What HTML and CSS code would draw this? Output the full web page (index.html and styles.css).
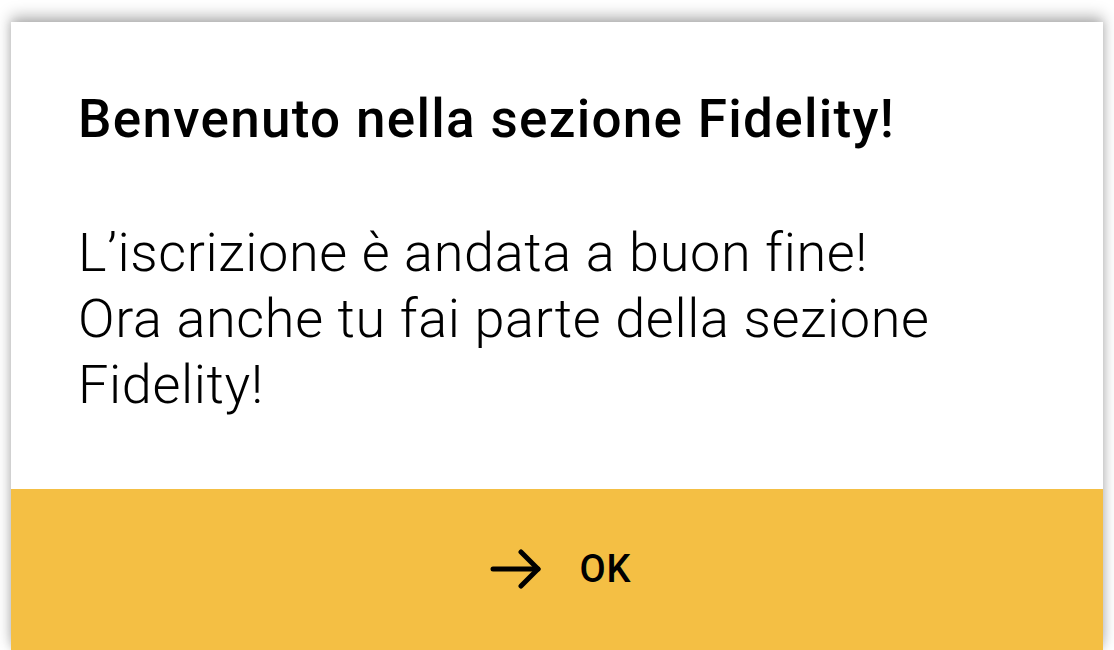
FILE: index.html
```html
<!DOCTYPE html>
<html lang="it">
<head>
<meta charset="utf-8">
<link rel="stylesheet" href="styles.css">
</head>
<body>
<div class="dialog">
  <div class="content">
    <h1 class="title">Benvenuto nella sezione Fidelity!</h1>
    <p class="message">L’iscrizione è andata a buon fine!<br>Ora anche tu fai parte della sezione Fidelity!</p>
  </div>
  <div class="footer">
    <button class="ok-btn">
      <svg class="arrow" width="52" height="40" viewBox="0 0 52 40" fill="none" stroke="#000" stroke-width="5" stroke-linecap="round" stroke-linejoin="round">
        <path d="M3 20 H48"/>
        <path d="M31 3 L48 20 L31 37"/>
      </svg>
      <span class="ok-label">OK</span>
    </button>
  </div>
</div>
</body>
</html>
```
FILE: styles.css
```css
html, body {
  margin: 0;
  padding: 0;
  background: #ffffff;
  overflow: hidden;
  height: 650px;
}
.dialog {
  margin: 22px 0 0 11px;
  width: 1092px;
  height: 628px;
  background: #ffffff;
  box-shadow: 0 -6px 14px rgba(0,0,0,0.28), 0 0 8px rgba(0,0,0,0.12);
  display: flex;
  flex-direction: column;
  font-family: Roboto, "Liberation Sans", sans-serif;
  color: #000;
}
.content {
  height: 467px;
  padding: 0 40px 0 67px;
  box-sizing: border-box;
}
.title {
  margin: 64px 0 0 0;
  font-size: 53px;
  letter-spacing: 1.3px;
  font-weight: 500;
  line-height: 66px;
}
.message {
  margin: 68px 0 0 0;
  font-size: 54px;
  letter-spacing: 0.65px;
  font-weight: 300;
  line-height: 66px;
  max-width: 900px;
}
.footer {
  flex: 1;
  background: #f4bf44;
  display: flex;
  justify-content: center;
  align-items: flex-start;
  padding: 58px 0 0 8px;
}
.ok-btn {
  background: none;
  border: 0;
  padding: 0;
  display: flex;
  align-items: center;
  gap: 37px;
  cursor: pointer;
}
.ok-label {
  font-family: Roboto, "Liberation Sans", sans-serif;
  font-size: 38px;
  letter-spacing: 1px;
  font-weight: 500;
  color: #000;
}
```
